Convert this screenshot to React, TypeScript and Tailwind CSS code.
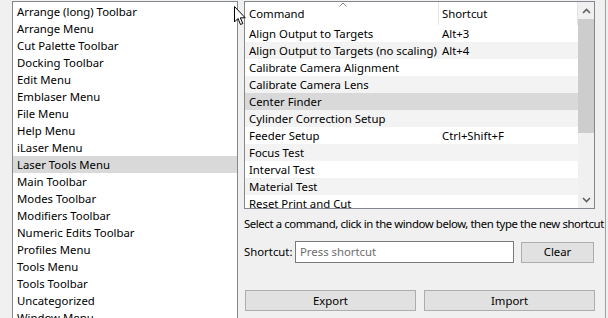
import React from "react";

const leftItems = [
  "Arrange (long) Toolbar",
  "Arrange Menu",
  "Cut Palette Toolbar",
  "Docking Toolbar",
  "Edit Menu",
  "Emblaser Menu",
  "File Menu",
  "Help Menu",
  "iLaser Menu",
  "Laser Tools Menu",
  "Main Toolbar",
  "Modes Toolbar",
  "Modifiers Toolbar",
  "Numeric Edits Toolbar",
  "Profiles Menu",
  "Tools Menu",
  "Tools Toolbar",
  "Uncategorized",
  "Window Menu",
];

const commands: [string, string][] = [
  ["Align Output to Targets", "Alt+3"],
  ["Align Output to Targets (no scaling)", "Alt+4"],
  ["Calibrate Camera Alignment", ""],
  ["Calibrate Camera Lens", ""],
  ["Center Finder", ""],
  ["Cylinder Correction Setup", ""],
  ["Feeder Setup", "Ctrl+Shift+F"],
  ["Focus Test", ""],
  ["Interval Test", ""],
  ["Material Test", ""],
  ["Reset Print and Cut", ""],
];

export default function App() {
  return (
    <div className="relative w-[608px] h-[318px] overflow-hidden bg-[#f0f0f0] flex font-['Noto_Sans','Open_Sans',sans-serif] text-[11.35px] text-black">
      {/* Left category list */}
      <div className="ml-[12px] mt-[1px] w-[226px] h-[340px] shrink-0 border border-[#828790] bg-white pt-[1px]">
        {leftItems.map((it) => (
          <div
            key={it}
            className={`h-[17px] leading-[17px] pl-[4px] whitespace-nowrap ${
              it === "Laser Tools Menu" ? "bg-[#d9d9d9]" : ""
            }`}
          >
            {it}
          </div>
        ))}
      </div>

      {/* Right column */}
      <div className="ml-[6px] w-[351px] shrink-0 flex flex-col">
        {/* Table */}
        <div className="mt-[1px] h-[208px] border border-[#828790] bg-white flex overflow-hidden">
          <div className="flex-1 flex flex-col overflow-hidden">
            <div className="relative h-[23px] shrink-0 flex">
              <div className="w-[194px] border-r border-[#e5e5e5] pl-[4px] pt-[3px] leading-[17px]">
                Command
              </div>
              <div className="flex-1 border-r border-[#e5e5e5] pl-[3px] pt-[3px] leading-[17px]">
                Shortcut
              </div>
              <svg
                className="absolute left-[94px] top-[0px]"
                width="8"
                height="5"
                viewBox="0 0 8 5"
              >
                <path d="M0.5 4.5 L4 1 L7.5 4.5" fill="none" stroke="#8a8a8a" strokeWidth="1" />
              </svg>
            </div>
            {commands.map(([c, s], i) => (
              <div
                key={c}
                className={`h-[17px] shrink-0 leading-[17px] flex whitespace-nowrap ${
                  i === 4 ? "bg-[#d9d9d9]" : i % 2 === 1 ? "bg-[#f3f3f3]" : "bg-white"
                }`}
              >
                <div className="w-[194px] pl-[4px] overflow-hidden">{c}</div>
                <div className="flex-1 pl-[3px]">{s}</div>
              </div>
            ))}
          </div>
          {/* Scrollbar */}
          <div className="w-[16px] shrink-0 bg-[#f0f0f0] flex flex-col">
            <div className="h-[17px] flex items-center justify-center">
              <svg width="9" height="6" viewBox="0 0 9 6">
                <path d="M1 5 L4.5 1.5 L8 5" fill="none" stroke="#606060" strokeWidth="1.6" />
              </svg>
            </div>
            <div className="h-[114px] bg-[#cdcdcd]" />
            <div className="flex-1" />
            <div className="h-[17px] flex items-center justify-center">
              <svg width="9" height="6" viewBox="0 0 9 6">
                <path d="M1 1 L4.5 4.5 L8 1" fill="none" stroke="#606060" strokeWidth="1.6" />
              </svg>
            </div>
          </div>
        </div>

        <div className="mt-[6px] h-[17px] leading-[17px] whitespace-nowrap tracking-[-0.4px]">
          Select a command, click in the window below, then type the new shortcut
        </div>

        <div className="mt-[9px] flex items-center">
          <div className="w-[51px]">Shortcut:</div>
          <div className="w-[219px] h-[22px] border border-[#7a7a7a] bg-white pl-[4px] leading-[20px] text-[#6d6d6d]">
            Press shortcut
          </div>
          <div className="ml-[7px] w-[73px] h-[21px] border border-[#adadad] bg-[#e1e1e1] flex items-center justify-center">
            Clear
          </div>
        </div>

        <div className="mt-[27px] flex gap-[8px] pl-[1px]">
          <div className="w-[171px] h-[21px] border border-[#adadad] bg-[#e1e1e1] flex items-center justify-center">
            Export
          </div>
          <div className="w-[171px] h-[21px] border border-[#adadad] bg-[#e1e1e1] flex items-center justify-center">
            Import
          </div>
        </div>
      </div>

      {/* Right edge separator */}
      <div className="ml-[10px] w-[1px] h-full bg-[#a0a0a0] shrink-0" />

      {/* Mouse cursor */}
      <svg
        className="absolute left-[234px] top-[6px]"
        width="13"
        height="20"
        viewBox="0 0 13 20"
      >
        <path
          d="M0.5 0.5 L0.5 16 L4 12.5 L6.5 18.5 L8.8 17.5 L6.3 11.8 L11.2 11.8 Z"
          fill="white"
          stroke="black"
          strokeWidth="1"
          strokeLinejoin="miter"
        />
      </svg>
    </div>
  );
}
